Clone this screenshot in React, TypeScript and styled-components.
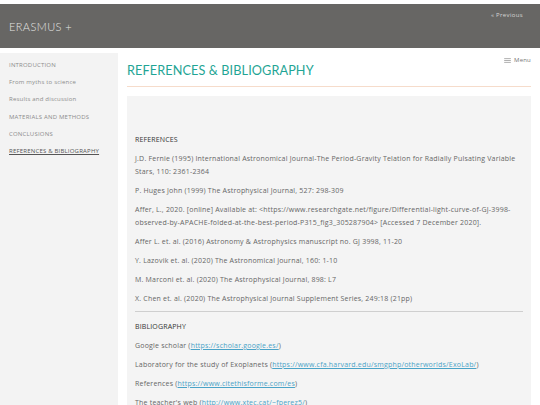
import React from "react";
import styled, { createGlobalStyle } from "styled-components";

const GlobalStyle = createGlobalStyle`
  html, body {
    margin: 0;
    padding: 0;
    background: #ffffff;
    font-family: "Open Sans", "Lato", sans-serif;
  }
`;

const Page = styled.div`
  width: 540px;
  height: 405px;
  overflow: hidden;
  padding-top: 4px;
  box-sizing: border-box;
`;

const Header = styled.header`
  height: 44px;
  background: #676664;
  display: flex;
  justify-content: space-between;
  align-items: flex-start;
  padding: 0 17px 0 9px;
`;

const Brand = styled.div`
  color: #e4e4e2;
  font-family: "Lato", sans-serif;
  font-size: 11px;
  font-weight: 300;
  letter-spacing: 0.4px;
  margin-top: 16px;
`;

const PrevLink = styled.a`
  color: #d6d6d4;
  font-size: 6px;
  letter-spacing: 0.35px;
  margin-top: 7px;
  text-decoration: none;
`;

const Body = styled.div`
  display: flex;
  margin-top: 5px;
  gap: 9px;
`;

const Sidebar = styled.nav`
  width: 118px;
  flex-shrink: 0;
  background: #f3f3f3;
  height: 360px;
  padding: 4px 0 0 9px;
  box-sizing: border-box;
  display: flex;
  flex-direction: column;
`;

const NavItem = styled.a<{ active?: boolean }>`
  font-size: 6px;
  letter-spacing: 0.2px;
  line-height: 17.2px;
  color: ${({ active }) => (active ? "#555" : "#8c8c8c")};
  text-decoration: ${({ active }) => (active ? "underline" : "none")};
`;

const Main = styled.main`
  flex: 1;
  padding-right: 9px;
  display: flex;
  flex-direction: column;
`;

const TitleRow = styled.div`
  display: flex;
  justify-content: space-between;
  align-items: flex-start;
  border-bottom: 1.5px solid #f6dccb;
  height: 34px;
  box-sizing: border-box;
`;

const Title = styled.h1`
  margin: 9px 0 0;
  font-family: "Lato", sans-serif;
  font-size: 12.7px;
  font-weight: 400;
  color: #1fa595;
  letter-spacing: 0.1px;
`;

const MenuBtn = styled.div`
  display: flex;
  align-items: center;
  gap: 3px;
  margin-top: 3px;
  font-size: 6px;
  letter-spacing: 0.2px;
  color: #777;
`;

const Content = styled.section`
  margin-top: 9px;
  background: #f4f4f4;
  padding: 38px 8px 0 8px;
  flex: 1;
`;

const Heading = styled.h2`
  margin: 0 0 7px;
  font-size: 7px;
  letter-spacing: 0.15px;
  font-weight: 400;
  color: #333;
  line-height: 11px;
`;

const Entry = styled.p`
  margin: 0 0 6px;
  font-size: 7px;
  letter-spacing: 0.2px;
  line-height: 13px;
  color: #666;
`;

const Rule = styled.hr`
  border: none;
  border-top: 1px solid #cfcfcf;
  margin: 2px 0 9px;
`;

const Link = styled.a`
  color: #4aa3c7;
  text-decoration: underline;
`;

const navItems = [
  "INTRODUCTION",
  "From myths to science",
  "Results and discussion",
  "MATERIALS AND METHODS",
  "CONCLUSIONS",
  "REFERENCES & BIBLIOGRAPHY",
];

const references = [
  "J.D. Fernie (1995) International Astronomical Journal-The Period-Gravity Telation for Radially Pulsating Variable Stars, 110: 2361-2364",
  "P. Huges John (1999) The Astrophysical Journal, 527: 298-309",
  "Affer, L., 2020. [online] Available at: <https://www.researchgate.net/figure/Differential-light-curve-of-GJ-3998-observed-by-APACHE-folded-at-the-best-period-P315_fig3_305287904> [Accessed 7 December 2020].",
  "Affer L. et. al. (2016) Astronomy & Astrophysics manuscript no. GJ 3998, 11-20",
  "Y. Lazovik et. al. (2020) The Astronomical Journal, 160: 1-10",
  "M. Marconi et. al. (2020) The Astrophysical Journal, 898: L7",
  "X. Chen et. al. (2020) The Astrophysical Journal Supplement Series, 249:18 (21pp)",
];

const bibliography = [
  { label: "Google scholar", url: "https://scholar.google.es/" },
  {
    label: "Laboratory for the study of Exoplanets",
    url: "https://www.cfa.harvard.edu/smgphp/otherworlds/ExoLab/",
  },
  { label: "References", url: "https://www.citethisforme.com/es" },
  { label: "The teacher's web", url: "http://www.xtec.cat/~fperez5/" },
];

const MenuIcon = () => (
  <svg width="7" height="5" viewBox="0 0 8 6">
    <rect x="0" y="0.5" width="8" height="0.8" fill="#888" />
    <rect x="0" y="2.6" width="8" height="0.8" fill="#888" />
    <rect x="0" y="4.7" width="8" height="0.8" fill="#888" />
  </svg>
);

export default function App() {
  return (
    <>
      <GlobalStyle />
      <Page>
        <Header>
          <Brand>ERASMUS +</Brand>
          <PrevLink>« Previous</PrevLink>
        </Header>
        <Body>
          <Sidebar>
            {navItems.map((item, i) => (
              <NavItem key={item} active={i === navItems.length - 1}>
                {item}
              </NavItem>
            ))}
          </Sidebar>
          <Main>
            <TitleRow>
              <Title>REFERENCES &amp; BIBLIOGRAPHY</Title>
              <MenuBtn>
                <MenuIcon />
                Menu
              </MenuBtn>
            </TitleRow>
            <Content>
              <Heading>REFERENCES</Heading>
              {references.map((r) => (
                <Entry key={r}>{r}</Entry>
              ))}
              <Rule />
              <Heading>BIBLIOGRAPHY</Heading>
              {bibliography.map((b) => (
                <Entry key={b.label}>
                  {b.label} (<Link>{b.url}</Link>)
                </Entry>
              ))}
            </Content>
          </Main>
        </Body>
      </Page>
    </>
  );
}
